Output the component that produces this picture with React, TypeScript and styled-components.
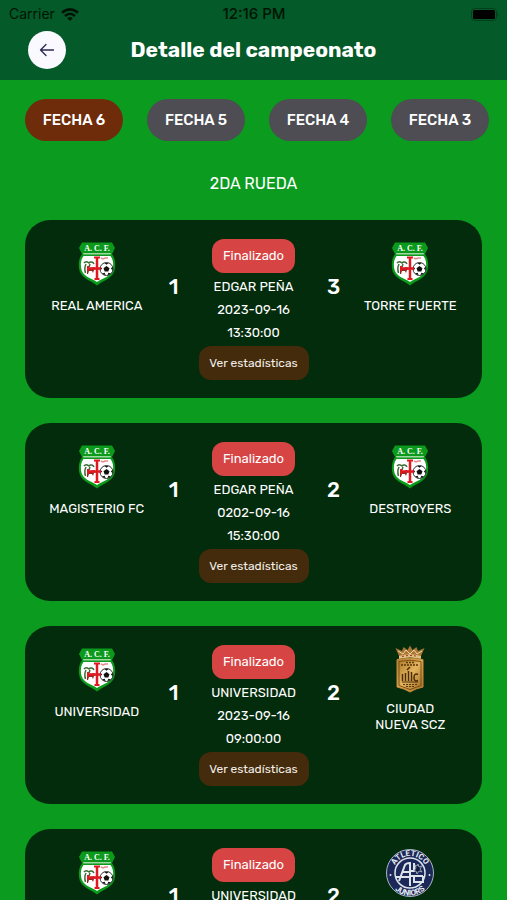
import React from "react";
import styled, { createGlobalStyle } from "styled-components";

const GlobalStyle = createGlobalStyle`
  * { box-sizing: border-box; }
  body {
    margin: 0;
    background: #0a9b1f;
    font-family: Rubik, Roboto, "Open Sans", sans-serif;
    color: #fff;
  }
  button { font-family: inherit; border: 0; cursor: pointer; }
`;

const Screen = styled.div`
  height: 100vh;
  display: flex;
  flex-direction: column;
  overflow: hidden;
`;

const Header = styled.header`
  flex: none;
  background: #045a28;
`;

const StatusBar = styled.div`
  display: grid;
  grid-template-columns: 1fr auto 1fr;
  align-items: center;
  height: 28px;
  padding: 0 8px 0 9px;
  color: #001405;
  font: 500 15px/28px Inter, sans-serif;
`;

const Carrier = styled.span`
  display: flex;
  align-items: center;
  gap: 6px;
  font-size: 14px;
  font-weight: 400;
`;

const Battery = styled.svg`
  justify-self: end;
`;

const TitleBar = styled.div`
  display: grid;
  grid-template-columns: 38px 1fr 38px;
  align-items: center;
  height: 52px;
  padding: 0 28px 8px;
`;

const BackButton = styled.button`
  display: grid;
  place-items: center;
  width: 38px;
  height: 38px;
  padding: 0;
  border-radius: 50%;
  background: #f9f9ff;
`;

const Title = styled.h1`
  margin: 0;
  text-align: center;
  font-size: 21px;
  line-height: 28px;
  font-weight: 700;
`;

const Content = styled.main`
  flex: 1;
  min-height: 0;
  overflow-y: auto;
  scrollbar-width: none;
`;

const Rounds = styled.nav`
  display: flex;
  gap: 24px;
  padding: 19px 16px 0 25px;
  overflow-x: auto;
  scrollbar-width: none;
`;

const RoundButton = styled.button<{ $active: boolean }>`
  flex: none;
  width: 98px;
  height: 42px;
  padding: 0;
  border-radius: 21px;
  background: ${(p) => (p.$active ? "#6e2c0b" : "#4d4d53")};
  color: #fff;
  font-size: 15px;
  font-weight: 500;
`;

const Stage = styled.h2`
  margin: 32px 0 25px;
  text-align: center;
  font-size: 16px;
  line-height: 22px;
  font-weight: 400;
`;

const Matches = styled.div`
  display: flex;
  flex-direction: column;
  gap: 25px;
  padding: 0 25px 25px;
`;

const Card = styled.article`
  display: grid;
  grid-template-columns: 1fr 44px 116px 44px 1fr;
  min-height: 178px;
  padding: 19px 17px 17px;
  border-radius: 25px;
  background: #032c0c;
`;

const Team = styled.div`
  display: flex;
  flex-direction: column;
  align-items: center;
  gap: 6px;
`;

const TeamName = styled.span`
  display: grid;
  align-items: center;
  min-height: 22px;
  text-align: center;
  white-space: pre-line;
  font-size: 13px;
  line-height: 16px;
`;

const Score = styled.strong`
  padding-top: 35px;
  text-align: center;
  font-size: 21px;
  line-height: 26px;
  font-weight: 500;
`;

const Details = styled.div`
  display: flex;
  flex-direction: column;
  align-items: center;
  font-size: 13px;
  line-height: 23px;
`;

const State = styled.span`
  margin-bottom: 2px;
  padding: 0 10px;
  border-radius: 12px;
  background: #d64444;
  line-height: 34px;
  min-width: 83px;
  text-align: center;
`;

const StatsButton = styled.button`
  min-width: 110px;
  height: 34px;
  margin-top: 2px;
  padding: 0 8px;
  border-radius: 12px;
  background: #432b0c;
  color: #f3efe9;
  font-size: 12px;
`;

const AcfCrest = () => (
  <svg width="50" height="50" viewBox="0 0 50 50" role="img" aria-label="Escudo A.C.F.">
    <path d="M10 3.500H40L43 9L40 15C43 19 43.500 24 43 29C42 39 32 41 25 46.500C18 41 8 39 7 29C6.500 24 7 19 10 15L7 9Z" fill="#0b9a1c" />
    <path d="M11.500 17H38.500C41 20 41.500 24 41 28.500C40 37.500 31 39 25 43C19 39 10 37.500 9 28.500C8.500 24 9 20 11.500 17Z" fill="#fff" />
    <path d="M11 14H39L38.500 15.500H11.500Z" fill="#9fd8a2" />
    <g fill="#fff" fontFamily="Liberation Serif, serif" fontWeight="700" fontSize="8" textAnchor="middle">
      <text x="25" y="11.500">A. C. F.</text>
    </g>
    <path d="M12 24c2-2.500 3.500-1 5 0 1.500-2 4-1 5 1M14 25c-1.500 3-1.500 6-.5 9M18 25l-1 3" fill="none" stroke="#3b6b35" strokeWidth="1.500" />
    <path d="M15 28l3 1 4-1 2 2-2 1-1 3-1-2-3 0-1 3-1 0 0-4z" fill="#8d2a26" />
    <path d="M29 19l2 1 2-1 3 0" stroke="#e58a8a" strokeWidth="1.500" fill="none" />
    <circle cx="34.500" cy="30" r="6.500" fill="#fff" stroke="#333" strokeWidth="1" />
    <path d="M34.500 27l3 2.200-1.200 3.300h-3.600l-1.200-3.300zM32.500 24h4l-2 1.800zM40.700 27.500v4l-1.800-2zM39 34.500l-3.500 1.800.8-2.500zM30 34.500l3.500 1.800-.8-2.500zM28.300 27.500v4l1.800-2z" fill="#111" />
    <path d="M25 18V41M16 29.500H29" stroke="#e01820" strokeWidth="2.500" />
    <path d="M22 18.500H28M22.500 40H27.500M16 27V32" stroke="#e01820" strokeWidth="2" />
  </svg>
);

const CiudadCrest = () => (
  <svg width="50" height="50" viewBox="0 0 50 50" role="img" aria-label="Escudo Ciudad Nueva">
    <defs>
      <linearGradient id="gold" x1="0" y1="0" x2="1" y2="1">
        <stop offset="0" stopColor="#a87526" />
        <stop offset=".5" stopColor="#e3b45c" />
        <stop offset="1" stopColor="#96621d" />
      </linearGradient>
    </defs>
    <path d="M14 11L10.500 3L17 6L18.500 2L22.500 5L25 .5L27.500 5L31.500 2L33 6L39.500 3L36 11Z" fill="#a87636" />
    <path d="M13 6l5 3 3-4 4 4 4-4 3 4 5-3" fill="none" stroke="#f0d59c" strokeWidth="1" />
    <path d="M14 11Q25 7.500 36 11V14Q25 11 14 14Z" fill="#e3c182" />
    <path d="M17 11.500Q25 9.500 33 11.500" fill="none" stroke="#9b3324" strokeWidth="1" strokeDasharray="2 2" />
    <path d="M12 14.500Q25 12 38 14.500V42L31 44L25 47L19 44L12 42Z" fill="url(#gold)" stroke="#c28a3a" strokeWidth="1" />
    <path d="M14 16.500Q25 14 36 16.500V40.500L25 44.500L14 40.500Z" fill="none" stroke="#7d4d14" strokeWidth="1" />
    <path d="M21 17.500H29M16 20H34" stroke="#5c360d" strokeWidth="1.500" strokeDasharray="2 1" />
    <path d="M17.500 29v7M20.500 36V28M23.500 36V26M26.500 36V27M33 29.500q-4-1.500-4 3t4 3M22 25l3-3" fill="none" stroke="#4c2b08" strokeWidth="1.500" />
    <path d="M17 37H33" stroke="#4c2b08" strokeWidth="1" />
    <path d="M18 39.500H32M21 41.500H29" stroke="#5c360d" strokeWidth="1" strokeDasharray="2 1" />
  </svg>
);

const AtleticoCrest = () => (
  <svg width="50" height="50" viewBox="0 0 50 50" role="img" aria-label="Escudo Atlético Juniors">
    <defs>
      <path id="arc-top" d="M8 25A17 17 0 0 1 42 25" />
      <path id="arc-bottom" d="M2.500 25A22.500 22.500 0 0 0 47.500 25" />
    </defs>
    <circle cx="25" cy="25" r="23.500" fill="#1c2858" stroke="#aab6c6" strokeWidth="1" />
    <circle cx="25" cy="25" r="15" fill="#1c2858" stroke="#dce3ea" strokeWidth="1.500" />
    <g fill="#e8edf2" fontFamily="Roboto, sans-serif" fontWeight="700" fontSize="8">
      <text textAnchor="middle"><textPath href="#arc-top" startOffset="50%">ATLETICO</textPath></text>
      <text textAnchor="middle"><textPath href="#arc-bottom" startOffset="50%">JUNIORS</textPath></text>
    </g>
    <path d="M11 29H24M14 33L20 17Q21 15 25 15V38M18 24H25M29 15V23H25M25 28H38M38 28V34H29V28" fill="none" stroke="#dce3ea" strokeWidth="2" />
    <path d="M33 16l1 3 3-1-2 3 2 3-3-1-2 3-1-3-2 0 2-3-1-3 2 1z" fill="#111a3f" stroke="#96a6b8" strokeWidth="1" />
    <circle cx="5.500" cy="27" r="1" fill="#dce3ea" />
    <circle cx="44.500" cy="27" r="1" fill="#dce3ea" />
  </svg>
);

const crests = { acf: AcfCrest, ciudad: CiudadCrest, atletico: AtleticoCrest };

type Side = { name?: string; crest: keyof typeof crests; goals: number };
type Match = { home: Side; away: Side; venue: string; date?: string; time?: string };

const rounds = ["FECHA 6", "FECHA 5", "FECHA 4", "FECHA 3"];

const matches: Match[] = [
  {
    home: { name: "REAL AMERICA", crest: "acf", goals: 1 },
    away: { name: "TORRE FUERTE", crest: "acf", goals: 3 },
    venue: "EDGAR PEÑA",
    date: "2023-09-16",
    time: "13:30:00",
  },
  {
    home: { name: "MAGISTERIO FC", crest: "acf", goals: 1 },
    away: { name: "DESTROYERS", crest: "acf", goals: 2 },
    venue: "EDGAR PEÑA",
    date: "0202-09-16",
    time: "15:30:00",
  },
  {
    home: { name: "UNIVERSIDAD", crest: "acf", goals: 1 },
    away: { name: "CIUDAD\nNUEVA SCZ", crest: "ciudad", goals: 2 },
    venue: "UNIVERSIDAD",
    date: "2023-09-16",
    time: "09:00:00",
  },
  {
    home: { crest: "acf", goals: 1 },
    away: { crest: "atletico", goals: 2 },
    venue: "UNIVERSIDAD",
  },
];

const TeamView = ({ side }: { side: Side }) => {
  const Crest = crests[side.crest];
  return (
    <Team>
      <Crest />
      {side.name && <TeamName>{side.name}</TeamName>}
    </Team>
  );
};

const MatchCard = ({ match }: { match: Match }) => (
  <Card>
    <TeamView side={match.home} />
    <Score>{match.home.goals}</Score>
    <Details>
      <State>Finalizado</State>
      <span>{match.venue}</span>
      {match.date && <time>{match.date}</time>}
      {match.time && <time>{match.time}</time>}
      {match.time && <StatsButton type="button">Ver estadísticas</StatsButton>}
    </Details>
    <Score>{match.away.goals}</Score>
    <TeamView side={match.away} />
  </Card>
);

export default function App() {
  const [active, setActive] = React.useState(rounds[0]);
  return (
    <Screen>
      <GlobalStyle />
      <Header>
        <StatusBar>
          <Carrier>
            Carrier
            <svg width="18" height="13" viewBox="0 0 18 13" fill="none" stroke="#001405" strokeWidth="2.500" aria-hidden="true">
              <path d="M1 4.800Q9-2 17 4.800M4 8Q9 3.500 14 8" />
              <path d="M6.300 10.200Q9 7.800 11.700 10.200L9 13Z" fill="#001405" stroke="none" />
            </svg>
          </Carrier>
          <span>12:16 PM</span>
          <Battery width="28" height="13" viewBox="0 0 28 13" aria-hidden="true">
            <rect x=".5" y=".5" width="25" height="12" rx="3.500" fill="none" stroke="#043f1c" />
            <rect x="2" y="2" width="22" height="9" rx="1.500" fill="#000" />
            <path d="M26.500 4.500Q28 6.500 26.500 8.500Z" fill="#043f1c" />
          </Battery>
        </StatusBar>
        <TitleBar>
          <BackButton type="button" aria-label="Volver">
            <svg width="16" height="14" viewBox="0 0 16 14" fill="none" stroke="#2b2850" strokeWidth="1.300" strokeLinecap="round" strokeLinejoin="round">
              <path d="M14.500 7H1.500M7 1.500L1.500 7L7 12.500" />
            </svg>
          </BackButton>
          <Title>Detalle del campeonato</Title>
        </TitleBar>
      </Header>
      <Content>
        <Rounds>
          {rounds.map((r) => (
            <RoundButton key={r} type="button" $active={r === active} onClick={() => setActive(r)}>
              {r}
            </RoundButton>
          ))}
        </Rounds>
        <Stage>2DA RUEDA</Stage>
        <Matches>
          {matches.map((m, i) => (
            <MatchCard key={i} match={m} />
          ))}
        </Matches>
      </Content>
    </Screen>
  );
}
